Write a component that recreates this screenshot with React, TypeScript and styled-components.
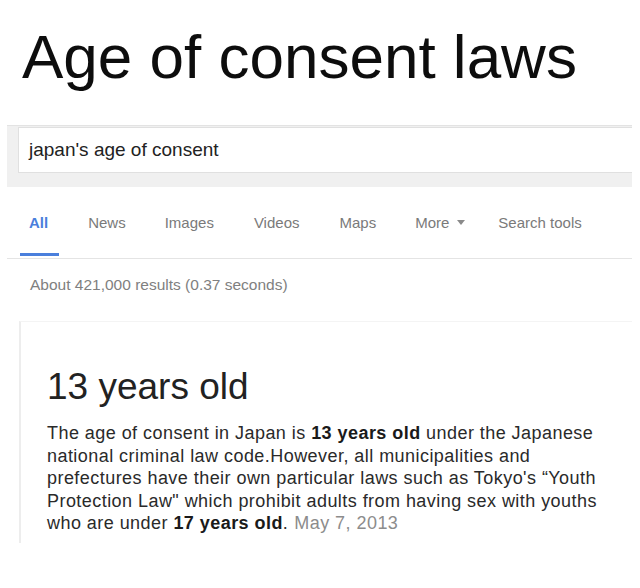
import * as React from "react";
import styled, { createGlobalStyle } from "styled-components";

const GlobalStyle = createGlobalStyle`
  html, body {
    margin: 0;
    padding: 0;
    background: #fff;
  }
  body {
    font-family: "Liberation Sans", Arial, sans-serif;
    color: #222;
  }
`;

const Page = styled.div`
  width: 640px;
  height: 588px;
  overflow: hidden;
  background: #fff;
`;

const Title = styled.h1`
  margin: 0;
  padding: 26px 0 0 22px;
  font-size: 62px;
  font-weight: 400;
  line-height: 62px;
  white-space: nowrap;
  color: #0d0d0d;
`;

const SearchBand = styled.div`
  margin: 37px 8px 0 7px;
  padding: 1px 0 14px 11px;
  background: #f0f0f0;
  border-top: 1px solid #e3e3e3;
`;

const SearchBox = styled.div`
  height: 44px;
  display: flex;
  align-items: center;
  padding-left: 10px;
  background: #fff;
  border: 1px solid #e0e0e0;
  border-right: none;
  font-size: 19px;
  color: #222;
`;

const Tabs = styled.nav`
  display: flex;
  margin: 0 8px 0 7px;
  padding-left: 22px;
  border-bottom: 1px solid #e4e4e4;
`;

const Tab = styled.div<{ $active?: boolean; $gap: number }>`
  position: relative;
  margin-left: ${(p) => p.$gap}px;
  padding: 27px 0 27px;
  line-height: 17px;
  font-size: 15px;
  color: ${(p) => (p.$active ? "#4a7fdc" : "#7a7a7a")};
  font-weight: ${(p) => (p.$active ? 700 : 400)};
  display: flex;
  align-items: center;
  gap: 8px;

  &::after {
    content: "";
    display: ${(p) => (p.$active ? "block" : "none")};
    position: absolute;
    left: -9px;
    right: -11px;
    bottom: 2px;
    height: 3px;
    background: #4a7fdc;
  }
`;

const Caret = styled.span`
  width: 0;
  height: 0;
  border-left: 4px solid transparent;
  border-right: 4px solid transparent;
  border-top: 5px solid #8a8a8a;
`;

const Stats = styled.div`
  padding: 17px 0 0 30px;
  font-size: 15.5px;
  line-height: 18px;
  color: #808080;
`;

const Card = styled.section`
  margin: 27px 8px 0 19px;
  height: 222px;
  padding: 43px 0 0 26px;
  box-sizing: border-box;
  background: #fff;
  border-left: 2px solid #ededed;
  border-top: 1px solid #f4f4f4;
`;

const Answer = styled.div`
  font-size: 37px;
  line-height: 44px;
  color: #222;
`;

const Snippet = styled.p`
  margin: 13px 0 0;
  font-size: 18px;
  line-height: 22.5px;
  letter-spacing: 0.45px;
  white-space: nowrap;
  color: #2a2a2a;

  b {
    font-weight: 700;
    color: #1a1a1a;
  }
`;

const Date = styled.span`
  color: #8c8c8c;
  margin-left: 6px;
`;

const tabs = [
  { label: "All", gap: 0, active: true },
  { label: "News", gap: 40 },
  { label: "Images", gap: 39 },
  { label: "Videos", gap: 40 },
  { label: "Maps", gap: 40 },
  { label: "More", gap: 39, caret: true },
  { label: "Search tools", gap: 33 },
];

const App = () => {
  return (
    <Page>
      <GlobalStyle />
      {/* headline swapped for a neutral one */}
      <Title>Age of consent laws</Title>
      <SearchBand>
        <SearchBox>japan's age of consent</SearchBox>
      </SearchBand>
      <Tabs>
        {tabs.map((t) => (
          <Tab key={t.label} $active={t.active} $gap={t.gap}>
            {t.label}
            {t.caret && <Caret />}
          </Tab>
        ))}
      </Tabs>
      <Stats>About 421,000 results (0.37 seconds)</Stats>
      <Card>
        <Answer>13 years old</Answer>
        <Snippet>
          The age of consent in Japan is <b>13 years old</b> under the Japanese
          <br />
          national criminal law code.However, all municipalities and
          <br />
          prefectures have their own particular laws such as Tokyo's “Youth
          <br />
          Protection Law" which prohibit adults from having sex with youths
          <br />
          who are under <b>17 years old</b>.<Date>May 7, 2013</Date>
        </Snippet>
      </Card>
    </Page>
  );
};

export default App;
